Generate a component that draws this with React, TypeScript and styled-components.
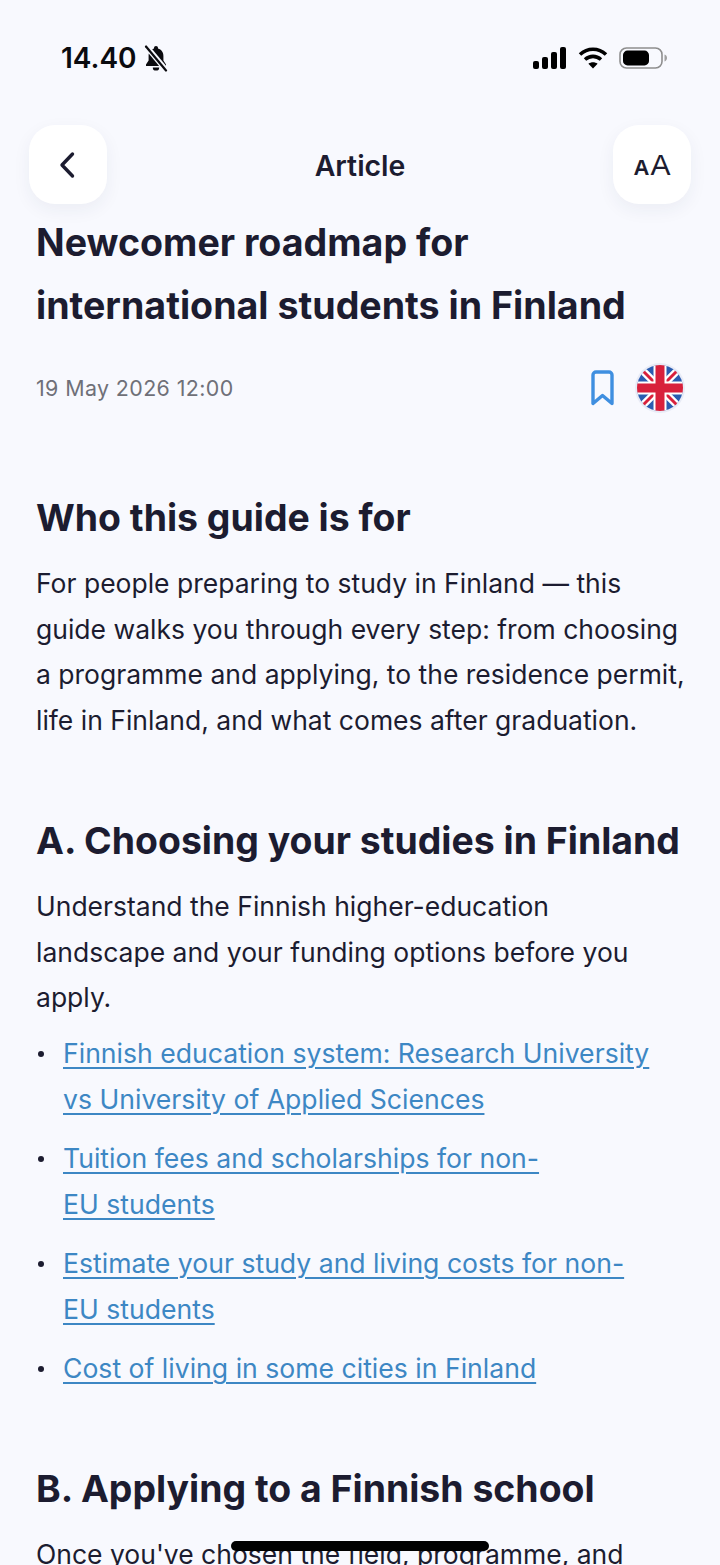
import React from 'react';
import styled, { createGlobalStyle } from 'styled-components';

const GlobalStyle = createGlobalStyle`
  html, body {
    margin: 0;
    padding: 0;
    background: #f8f9fe;
  }
  * {
    box-sizing: border-box;
  }
`;

const Screen = styled.div`
  position: relative;
  width: 720px;
  height: 1565px;
  overflow: hidden;
  background: #f8f9fe;
  font-family: 'Inter', sans-serif;
  color: #1c1c30;
`;

const StatusBar = styled.div`
  display: flex;
  align-items: center;
  justify-content: space-between;
  height: 116px;
  padding: 0 53px 0 61px;
`;

const StatusLeft = styled.div`
  display: flex;
  align-items: center;
  gap: 6px;
`;

const Time = styled.span`
  font-size: 28px;
  font-weight: 600;
  color: #0b0b0f;
`;

const StatusRight = styled.div`
  display: flex;
  align-items: center;
  gap: 11px;
`;

const Header = styled.header`
  display: flex;
  align-items: center;
  justify-content: space-between;
  height: 79px;
  margin-top: 9px;
  padding: 0 29px;
`;

const IconButton = styled.button`
  display: flex;
  align-items: center;
  justify-content: center;
  width: 78px;
  height: 79px;
  padding: 0;
  border: none;
  border-radius: 26px;
  background: #ffffff;
  color: #1c1c30;
  box-shadow: 0 6px 18px rgba(40, 50, 90, 0.06);
`;

const BackButton = styled(IconButton)`
  padding-right: 3px;
`;

const HeaderTitle = styled.h2`
  margin: 0;
  padding-top: 1px;
  font-size: 28.4px;
  font-weight: 580;
`;

const TextSize = styled.span<{ $big?: boolean }>`
  font-size: ${({ $big }) => ($big ? '30px' : '22px')};
  font-weight: ${({ $big }) => ($big ? 540 : 700)};
  line-height: 1;
`;

const TextSizeRow = styled.div`
  display: flex;
  align-items: baseline;
  gap: 1px;
`;

const Article = styled.main`
  padding: 7px 36px 0;
`;

const Title = styled.h1`
  margin: 0;
  font-size: 37.6px;
  font-weight: 700;
  line-height: 63px;
`;

const MetaRow = styled.div`
  display: flex;
  align-items: center;
  justify-content: space-between;
  margin-top: 25px;
  height: 52px;
`;

const DateText = styled.span`
  font-size: 21.4px;
  font-weight: 400;
  letter-spacing: 0.4px;
  color: #6f7078;
`;

const MetaActions = styled.div`
  display: flex;
  align-items: center;
  gap: 20px;
  margin-right: -1px;
`;

const SectionTitle = styled.h2<{ $gap: number }>`
  margin: ${({ $gap }) => $gap}px 0 0;
  font-size: 37.4px;
  font-weight: 700;
  line-height: 50px;
`;

const Paragraph = styled.p`
  margin: 18px 0 0;
  font-size: 26.5px;
  font-weight: 400;
  line-height: 45.7px;
  white-space: nowrap;
  color: #1c1c30;
`;

const LinkList = styled.ul`
  display: flex;
  flex-direction: column;
  gap: 13px;
  margin: 9px 0 0;
  padding: 0;
  list-style: none;
`;

const LinkItem = styled.li`
  position: relative;
  padding-left: 27px;
  font-size: 26.6px;
  line-height: 46px;

  &::before {
    content: '';
    position: absolute;
    left: 2px;
    top: 21px;
    width: 6px;
    height: 6px;
    border-radius: 50%;
    background: #1c1c30;
  }
`;

const ArticleLink = styled.a`
  color: #3d87c4;
  text-decoration: underline;
  text-decoration-thickness: 1.5px;
  text-underline-offset: 4px;
`;

const HomeIndicator = styled.div`
  position: absolute;
  left: 231px;
  top: 1541px;
  width: 258px;
  height: 10px;
  border-radius: 5px;
  background: #000000;
`;

const MutedBell = () => (
  <svg width="26" height="28" viewBox="0 0 26 28">
    <path
      d="M13 2c-1.200 0-2 .9-2 2v.6C7.600 5.500 5.600 8.400 5.600 12v4.600L3 20.600V22h20v-1.400l-2.600-4V12c0-3.600-2-6.500-5.400-7.400V4c0-1.100-.8-2-2-2z"
      fill="#0b0b0f"
    />
    <path d="M9.800 23.400h6.400a3.200 3.200 0 0 1-6.400 0z" fill="#0b0b0f" />
    <path d="M3 2l20 24" stroke="#f8f9fe" strokeWidth="5.500" />
    <path d="M3 2.500l20 24" stroke="#0b0b0f" strokeWidth="2.200" strokeLinecap="round" />
  </svg>
);

const SignalIcon = () => (
  <svg width="34" height="22" viewBox="0 0 34 22" fill="#000">
    <rect x="0" y="14" width="6" height="8" rx="2" />
    <rect x="9" y="10" width="6" height="12" rx="2" />
    <rect x="18" y="5" width="6" height="17" rx="2" />
    <rect x="27" y="0" width="6" height="22" rx="2" />
  </svg>
);

const WifiIcon = () => (
  <svg width="30" height="22" viewBox="0 0 30 22" fill="none" stroke="#000" strokeWidth="3.600">
    <path d="M2 7.500C9.500.5 20.500.5 28 7.500" />
    <path d="M7 12.500c4.800-4.200 11.200-4.200 16 0" />
    <path d="M15 21.500l-4.600-4.800c2.800-2 6.400-2 9.200 0z" fill="#000" stroke="none" />
  </svg>
);

const BatteryIcon = () => (
  <svg width="48" height="22" viewBox="0 0 48 22">
    <rect x="1" y="1" width="42" height="20" rx="6.500" fill="none" stroke="#8e8e8e" strokeWidth="1.600" />
    <rect x="4" y="3.600" width="26" height="14.800" rx="4.500" fill="#000" />
    <path d="M45.500 7.500c1.600.6 2.500 1.900 2.500 3.500s-.9 2.900-2.500 3.500z" fill="#a0a0a0" />
  </svg>
);

const BackIcon = () => (
  <svg width="18" height="28" viewBox="0 0 18 28" fill="none">
    <path d="M14.500 3L4 14l10.500 11" stroke="#1c1c30" strokeWidth="3.400" strokeLinecap="round" strokeLinejoin="round" />
  </svg>
);

const BookmarkIcon = () => (
  <svg width="24" height="36" viewBox="0 0 24 36" fill="none">
    <path
      d="M2 5a3 3 0 0 1 3-3h13a3 3 0 0 1 3 3v28.500L11.500 25.500 2 33.500z"
      stroke="#3f8fe0"
      strokeWidth="3.400"
      strokeLinejoin="round"
    />
  </svg>
);

const UkFlag = () => (
  <svg width="50" height="50" viewBox="0 0 50 50">
    <defs>
      <clipPath id="flag-clip">
        <circle cx="25" cy="25" r="23" />
      </clipPath>
    </defs>
    <circle cx="25" cy="25" r="25" fill="#e8ebf6" />
    <g clipPath="url(#flag-clip)">
      <rect width="50" height="50" fill="#2a5cb0" />
      <path d="M2 2l46 46M48 2L2 48" stroke="#ffffff" strokeWidth="7.500" />
      <path d="M2 2l46 46M48 2L2 48" stroke="#d8203c" strokeWidth="3" />
      <path d="M25 0v50M0 25h50" stroke="#ffffff" strokeWidth="13" />
      <path d="M25 0v50M0 25h50" stroke="#d8203c" strokeWidth="9" />
    </g>
  </svg>
);

const choosingLinks = [
  ['Finnish education system: Research University', 'vs University of Applied Sciences'],
  ['Tuition fees and scholarships for non-', 'EU students'],
  ['Estimate your study and living costs for non-', 'EU students'],
  ['Cost of living in some cities in Finland'],
];

const App = () => {
  return (
    <Screen>
      <GlobalStyle />
      <StatusBar>
        <StatusLeft>
          <Time>14.40</Time>
          <MutedBell />
        </StatusLeft>
        <StatusRight>
          <SignalIcon />
          <WifiIcon />
          <BatteryIcon />
        </StatusRight>
      </StatusBar>

      <Header>
        <BackButton aria-label="Back">
          <BackIcon />
        </BackButton>
        <HeaderTitle>Article</HeaderTitle>
        <IconButton aria-label="Text size">
          <TextSizeRow>
            <TextSize>A</TextSize>
            <TextSize $big>A</TextSize>
          </TextSizeRow>
        </IconButton>
      </Header>

      <Article>
        <Title>
          Newcomer roadmap for
          <br />
          international students in Finland
        </Title>
        <MetaRow>
          <DateText>19 May 2026 12:00</DateText>
          <MetaActions>
            <BookmarkIcon />
            <UkFlag />
          </MetaActions>
        </MetaRow>

        <SectionTitle $gap={79}>Who this guide is for</SectionTitle>
        <Paragraph>
          For people preparing to study in Finland — this
          <br />
          guide walks you through every step: from choosing
          <br />
          a programme and applying, to the residence permit,
          <br />
          life in Finland, and what comes after graduation.
        </Paragraph>

        <SectionTitle $gap={72}>A. Choosing your studies in Finland</SectionTitle>
        <Paragraph>
          Understand the Finnish higher-education
          <br />
          landscape and your funding options before you
          <br />
          apply.
        </Paragraph>
        <LinkList>
          {choosingLinks.map((lines) => (
            <LinkItem key={lines[0]}>
              <ArticleLink href="#">
                {lines[0]}
                {lines[1] && <br />}
                {lines[1]}
              </ArticleLink>
            </LinkItem>
          ))}
        </LinkList>

        <SectionTitle $gap={73}>B. Applying to a Finnish school</SectionTitle>
        <Paragraph>Once you've chosen the field, programme, and</Paragraph>
      </Article>

      <HomeIndicator />
    </Screen>
  );
};

export default App;
